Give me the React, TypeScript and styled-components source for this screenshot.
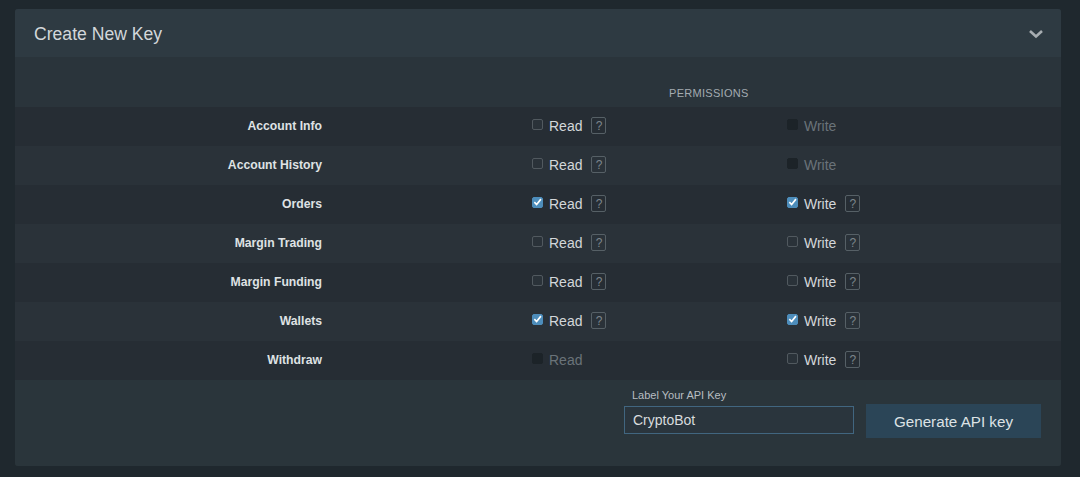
import React from "react";
import styled, { createGlobalStyle } from "styled-components";

const Global = createGlobalStyle`
  html, body { margin: 0; padding: 0; background: #1f282e; }
  body { font-family: "Liberation Sans", Arial, sans-serif; }
  * { box-sizing: border-box; }
`;

const Page = styled.div`
  width: 1080px;
  height: 477px;
  padding: 9px 19px 0 15px;
  background: #1f282e;
`;

const Panel = styled.section`
  width: 1046px;
  height: 457px;
  border-radius: 3px;
  overflow: hidden;
  background: #2a343b;
  display: flex;
  flex-direction: column;
`;

const Header = styled.header`
  height: 48px;
  background: #2e3a42;
  display: flex;
  align-items: center;
  justify-content: space-between;
  padding: 2px 17px 0 19px;
`;

const Title = styled.h2`
  margin: 0;
  font-size: 17.6px;
  font-weight: 400;
  color: #d3d7da;
`;

const ColHeader = styled.div`
  height: 50px;
  display: flex;
  align-items: flex-end;
  padding: 0 0 8px 654px;
  font-size: 11px;
  color: #a3abb1;
  letter-spacing: 0.3px;
`;

const Row = styled.div<{ $odd: boolean }>`
  height: 39px;
  display: grid;
  grid-template-columns: 307px 210px 255px 1fr;
  align-items: center;
  padding-bottom: 2px;
  background: ${(p) => (p.$odd ? "#262d34" : "#2a3239")};
`;

const Label = styled.div`
  text-align: right;
  font-size: 12.2px;
  font-weight: 700;
  color: #dfe2e4;
`;

const Cell = styled.div<{ $col: number }>`
  grid-column: ${(p) => p.$col};
  display: flex;
  align-items: center;
`;

const Box = styled.span<{ $state: "off" | "on" | "disabled" }>`
  width: 11px;
  height: 11px;
  border-radius: 2px;
  margin-top: -3px;
  margin-right: 6px;
  display: inline-flex;
  align-items: center;
  justify-content: center;
  background: ${(p) =>
    p.$state === "on" ? "#4d8dbb" : p.$state === "disabled" ? "#1c2328" : "#2a3239"};
  border: 1px solid
    ${(p) => (p.$state === "on" ? "#4d8dbb" : p.$state === "disabled" ? "#1c2328" : "#51595f")};
`;

const OptText = styled.span<{ $disabled: boolean }>`
  font-size: 14px;
  color: ${(p) => (p.$disabled ? "#6a7379" : "#d3d7da")};
`;

const Help = styled.span`
  width: 15px;
  height: 17px;
  margin-left: 9px;
  border: 1px solid #566066;
  border-radius: 2px;
  display: inline-flex;
  align-items: center;
  justify-content: center;
  font-size: 12px;
  color: #7d868c;
`;

const Footer = styled.div`
  flex: 1;
  background: #2a353b;
  display: flex;
  justify-content: flex-end;
  align-items: flex-start;
  padding: 9px 20px 0 0;
  gap: 12px;
`;

const Field = styled.label`
  display: flex;
  flex-direction: column;
`;

const FieldLabel = styled.span`
  font-size: 11px;
  color: #b8bec2;
  padding-left: 8px;
  margin-bottom: 4px;
  line-height: 13px;
`;

const Input = styled.input`
  width: 230px;
  height: 28px;
  background: #2a353d;
  border: 1px solid #416680;
  color: #d8dcde;
  font-family: "Liberation Sans", Arial, sans-serif;
  font-size: 14px;
  padding: 0 8px;
  outline: none;
`;

const Button = styled.button`
  width: 175px;
  height: 34px;
  margin-top: 15px;
  background: #2b4557;
  border: none;
  color: #dde2e5;
  font-family: "Liberation Sans", Arial, sans-serif;
  font-size: 15.2px;
  padding: 0;
`;

type S = "off" | "on" | "disabled";

const rows: { name: string; read: S; write: S; rh: boolean; wh: boolean }[] = [
  { name: "Account Info", read: "off", write: "disabled", rh: true, wh: false },
  { name: "Account History", read: "off", write: "disabled", rh: true, wh: false },
  { name: "Orders", read: "on", write: "on", rh: true, wh: true },
  { name: "Margin Trading", read: "off", write: "off", rh: true, wh: true },
  { name: "Margin Funding", read: "off", write: "off", rh: true, wh: true },
  { name: "Wallets", read: "on", write: "on", rh: true, wh: true },
  { name: "Withdraw", read: "disabled", write: "off", rh: false, wh: true },
];

const Check = () => (
  <svg width="10" height="10" viewBox="0 0 10 10">
    <path d="M1.5 5.2 L4 7.8 L8.8 1.8" fill="none" stroke="#fff" strokeWidth="1.8" />
  </svg>
);

const Option = ({ state, text, help }: { state: S; text: string; help: boolean }) => (
  <>
    <Box $state={state}>{state === "on" && <Check />}</Box>
    <OptText $disabled={state === "disabled"}>{text}</OptText>
    {help && <Help>?</Help>}
  </>
);

export default function App() {
  return (
    <Page>
      <Global />
      <Panel>
        <Header>
          <Title>Create New Key</Title>
          <svg width="16" height="10" viewBox="0 0 16 10">
            <path d="M2 2 L8 7.5 L14 2" fill="none" stroke="#a7adb1" strokeWidth="2.6" />
          </svg>
        </Header>
        <ColHeader>PERMISSIONS</ColHeader>
        {rows.map((r, i) => (
          <Row key={r.name} $odd={i % 2 === 0}>
            <Label>{r.name}</Label>
            <Cell $col={3}>
              <Option state={r.read} text="Read" help={r.rh} />
            </Cell>
            <Cell $col={4}>
              <Option state={r.write} text="Write" help={r.wh} />
            </Cell>
          </Row>
        ))}
        <Footer>
          <Field>
            <FieldLabel>Label Your API Key</FieldLabel>
            <Input defaultValue="CryptoBot" />
          </Field>
          <Button>Generate API key</Button>
        </Footer>
      </Panel>
    </Page>
  );
}
